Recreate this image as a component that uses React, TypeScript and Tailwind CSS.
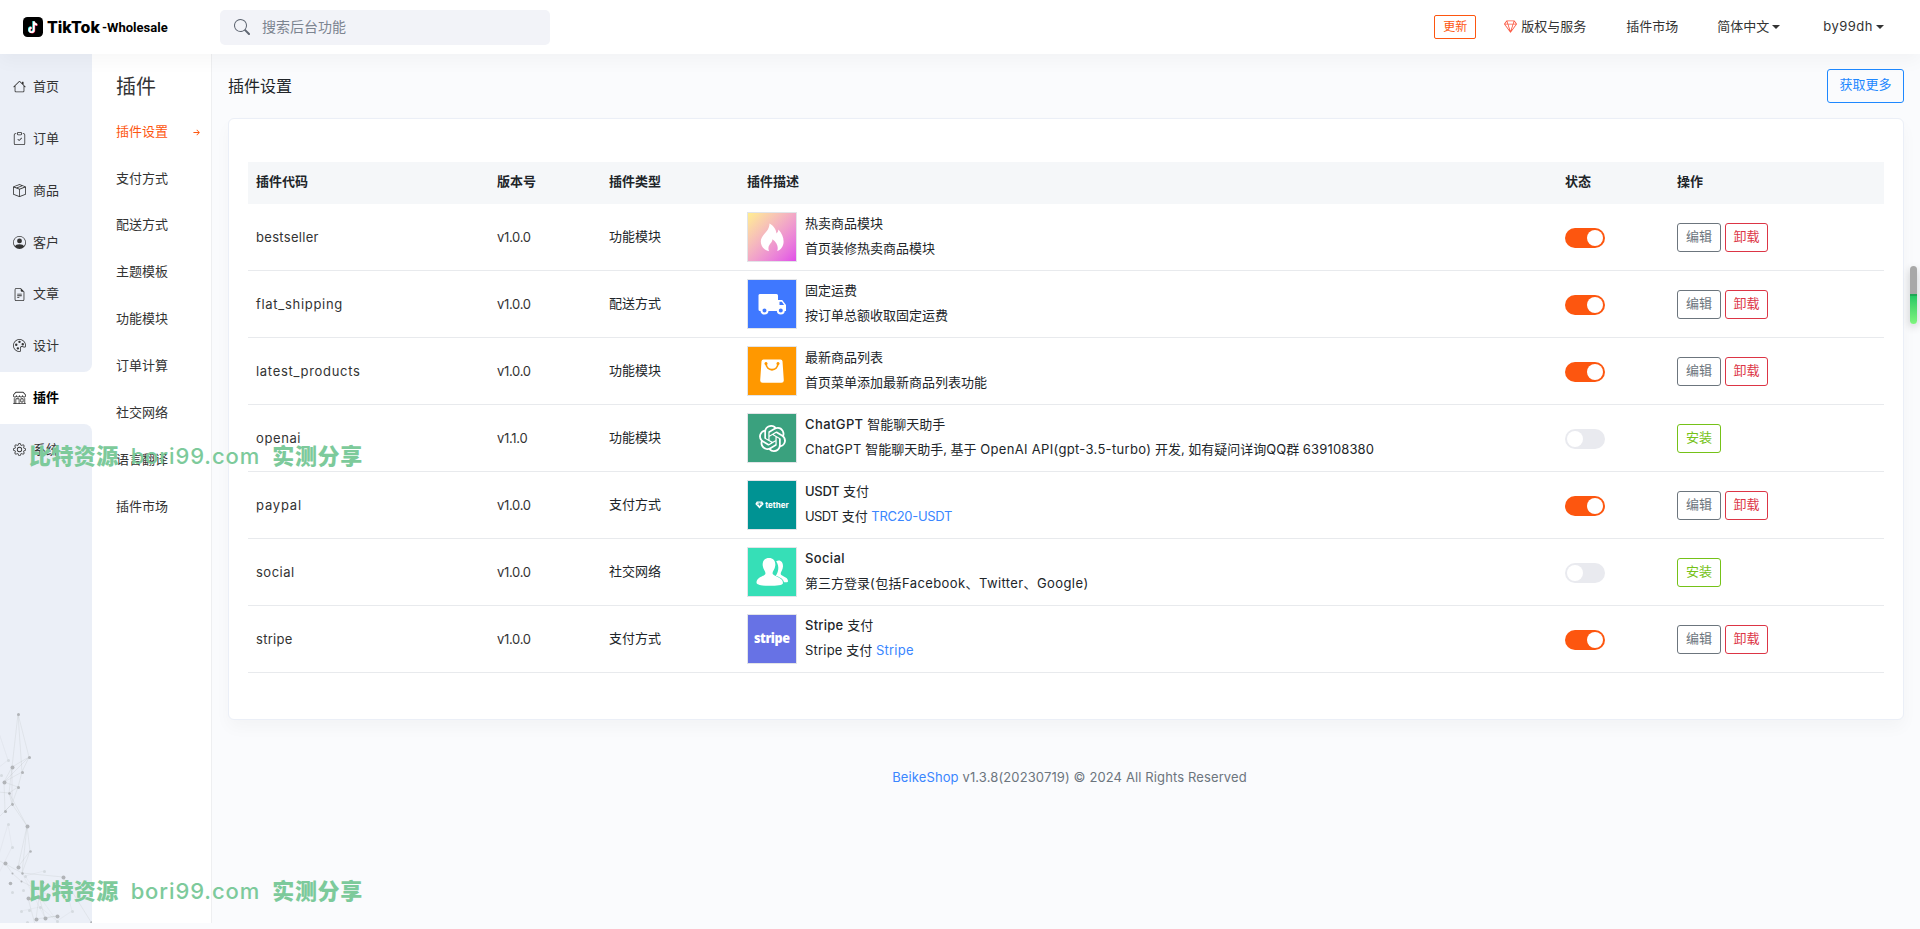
import * as React from 'react';
import {
  BsArrowRightShort,
  BsBoxSeam,
  BsClipboardCheck,
  BsFileEarmarkText,
  BsGear,
  BsGem,
  BsHouse,
  BsPalette,
  BsPersonCircle,
  BsSearch,
  BsShop,
} from 'react-icons/bs';
import { SiOpenai } from 'react-icons/si';

const sideMenu = [
  { label: '首页', icon: BsHouse },
  { label: '订单', icon: BsClipboardCheck },
  { label: '商品', icon: BsBoxSeam },
  { label: '客户', icon: BsPersonCircle },
  { label: '文章', icon: BsFileEarmarkText },
  { label: '设计', icon: BsPalette },
  { label: '插件', icon: BsShop },
  { label: '系统', icon: BsGear },
];

const ACTIVE = 6;

const subMenu = ['插件设置', '支付方式', '配送方式', '主题模板', '功能模块', '订单计算', '社交网络', '语言翻译', '插件市场'];

function FlameIcon() {
  return (
    <svg viewBox="0 0 48 48" className="h-12 w-12 fill-white">
      <path d="M21.500 10.500c4.500 2.500 6.500 6 7 10 1.300-1 1.800-2.400 1.900-3.900 3.300 3.800 5.200 7.600 5.200 11.900 0 4.700-2.600 8.200-6.400 9.500 1.400-4.200 0-8.300-4.700-11.800-.3 2.500-1.600 3.600-2.800 5.200-1.500 2-1.700 4.300-.6 6.800-4.700-1-8.300-4.700-8.300-9.700 0-7 8.700-9.300 8.700-18z" />
    </svg>
  );
}

function TruckIcon() {
  return (
    <svg viewBox="0 0 48 48" className="h-12 w-12">
      <path fill="#fff" d="M12.500 14h16a1.500 1.500 0 0 1 1.500 1.500V20h4.200l3.800 5v6h-26a1.500 1.500 0 0 1-1.500-1.500v-14A1.500 1.500 0 0 1 12.500 14z" />
      <path fill="#3f78ff" d="M31.500 21.800h2.300l2.300 3.200h-4.600z" />
      <circle cx="16.500" cy="30.500" r="3" fill="#3f78ff" stroke="#fff" strokeWidth="2" />
      <circle cx="32.800" cy="30.500" r="3" fill="#3f78ff" stroke="#fff" strokeWidth="2" />
    </svg>
  );
}

function BagIcon() {
  return (
    <svg viewBox="0 0 48 48" className="h-12 w-12">
      <path fill="#fff" d="M15.500 12.500h17a2 2 0 0 1 2 1.800l1.300 19a2.400 2.400 0 0 1-2.400 2.500H14.600a2.400 2.400 0 0 1-2.400-2.500l1.300-19a2 2 0 0 1 2-1.800z" />
      <path fill="none" stroke="#ff9800" strokeWidth="1.800" strokeLinecap="round" d="M18 16.500c.5 8.300 11.500 8.300 12 0" />
      <circle cx="18" cy="16.500" r="1.500" fill="#ff9800" />
      <circle cx="30" cy="16.500" r="1.500" fill="#ff9800" />
    </svg>
  );
}

function PeopleIcon() {
  return (
    <svg viewBox="0 0 48 48" className="h-12 w-12 fill-white">
      <path d="M28.200 13.300c3.800-2 7 .5 6.800 5.300-.2 3.300-2.300 5.300-2.300 7.200 0 2.600 7.300 2.900 7.300 7.100 0 1-.6 1.300-1.600 1.300h-2.400c-1.200-3.800-4.500-5-8.200-6.400 2.200-3.300 4.200-8.600.4-14.500z" />
      <path d="M21 10c4.300 0 6.700 3 6.300 7.500-.3 3.600-2.800 5.700-2.800 7.700 0 3.200 10.500 3.400 10.500 9.700 0 2.200-6.500 2.900-13.500 2.900S8.500 37 8.500 34.800c0-6.300 9-6.200 9-9.500 0-2-2.500-4.200-2.800-7.800C14.300 13 16.700 10 21 10z" />
    </svg>
  );
}

function TetherLogo() {
  return (
    <div className="flex items-center gap-px">
      <svg viewBox="0 0 10 9" className="h-2 w-[9px]">
        <path fill="#fff" d="M2 .500h6l1.700 3L5 8.500.3 3.500z" />
        <path fill="none" stroke="#009393" strokeWidth=".7" d="M3 2.300h4M5 2.300v3.400M2.700 3.800h4.600" />
      </svg>
      <span className="text-[8px] leading-none font-bold text-white">tether</span>
    </div>
  );
}

const plugins = [
  {
    code: 'bestseller', codeClass: 'tracking-[0.300px]', version: 'v1.0.0', type: '功能模块', title: '热卖商品模块',
    desc: '首页装修热卖商品模块', installed: true,
    bg: 'bg-gradient-to-br from-[#ffee8f] to-[#e14be8]', logo: <FlameIcon />,
  },
  {
    code: 'flat_shipping', codeClass: 'tracking-[0.700px]', version: 'v1.0.0', type: '配送方式', title: '固定运费',
    desc: '按订单总额收取固定运费', installed: true,
    bg: 'bg-[#3f78ff]', logo: <TruckIcon />,
  },
  {
    code: 'latest_products', codeClass: 'tracking-[0.700px]', version: 'v1.0.0', type: '功能模块', title: '最新商品列表',
    desc: '首页菜单添加最新商品列表功能', installed: true,
    bg: 'bg-[#ff9800]', logo: <BagIcon />,
  },
  {
    code: 'openai', codeClass: 'tracking-[0.600px]', version: 'v1.1.0', type: '功能模块', brand: 'ChatGPT', title: '智能聊天助手',
    desc: (
      <>
        <span className="tracking-[0.200px]">ChatGPT</span> 智能聊天助手, 基于{' '}
        <span className="tracking-[0.320px]">OpenAI API(gpt-3.5-turbo)</span> 开发, 如有疑问详询QQ群{' '}
        <span className="tracking-[0.150px]">639108380</span>
      </>
    ),
    installed: false,
    bg: 'bg-[#3aa17e]', logo: <SiOpenai className="text-[27px] text-white" />,
  },
  {
    code: 'paypal', codeClass: 'tracking-[0.800px]', version: 'v1.0.0', type: '支付方式', brand: 'USDT', title: '支付',
    brandClass: 'tracking-[-0.300px]',
    desc: <><span className="tracking-[-0.600px]">USDT</span> 支付</>,
    link: 'TRC20-USDT', linkClass: 'tracking-[-0.300px]', installed: true,
    bg: 'bg-[#009393]', logo: <TetherLogo />,
  },
  {
    code: 'social', codeClass: 'tracking-[0.500px]', version: 'v1.0.0', type: '社交网络', brand: 'Social', title: '',
    brandClass: 'tracking-[0.350px]',
    desc: <>第三方登录<span className="tracking-[0.400px]">(包括Facebook、Twitter、Google)</span></>, installed: false,
    bg: 'bg-[#36dfb7]', logo: <PeopleIcon />,
  },
  {
    code: 'stripe', codeClass: 'tracking-[0.300px]', version: 'v1.0.0', type: '支付方式', brand: 'Stripe', title: '支付',
    brandClass: 'tracking-[0.250px]',
    desc: <><span className="tracking-[0.200px]">Stripe</span> 支付</>,
    link: 'Stripe', linkClass: 'tracking-[0.250px]', installed: true,
    bg: 'bg-[#6772e5]',
    logo: <span className="scale-x-90 pb-0.5 font-['Open_Sans'] text-[14px] leading-none font-extrabold tracking-[-0.500px] text-white">stripe</span>,
  },
];

const columns = 'grid grid-cols-[240px_112px_138px_818px_112px_1fr] items-center';

function Caret() {
  return <span className="ml-[3px] inline-block border-x-4 border-t-4 border-x-transparent border-t-[#333]" />;
}

function Logo() {
  return (
    <div className="flex w-[220px] items-center pl-[23px]">
      <svg viewBox="0 0 20 20" className="h-5 w-5">
        <rect width="20" height="20" rx="4.500" fill="#000" />
        <g fill="none" strokeWidth="1.900">
          <path stroke="#25f4ee" d="M10.300 4v8.500a2.200 2.200 0 1 1-2.200-2.200M10.300 4c.2 1.900 1.500 3 3.300 3.200" />
          <path stroke="#fe2c55" d="M11.300 4.800v8.500a2.200 2.200 0 1 1-2.200-2.200M11.300 4.800c.2 1.900 1.500 3 3.300 3.200" />
          <path stroke="#fff" d="M10.800 4.400v8.500a2.200 2.200 0 1 1-2.200-2.200M10.800 4.400c.2 1.900 1.500 3 3.300 3.200" />
        </g>
      </svg>
      <span className="ml-1 w-[55px] text-[16px] font-extrabold text-black">TikTok</span>
      <span className="mt-0.5 font-['Roboto'] text-[13px] font-bold text-black">-Wholesale</span>
    </div>
  );
}

function Header() {
  return (
    <header className="relative z-10 flex h-[54px] items-center bg-white shadow-[0_8px_16px_rgba(0,0,0,0.030)]">
      <Logo />
      <div className="flex h-[35px] w-[330px] items-center rounded-[5px] bg-[#f2f3f8] pl-3.5">
        <BsSearch className="text-base text-[#5f6672]" />
        <span className="ml-3 text-sm text-[#7c8490]">搜索后台功能</span>
      </div>
      <div className="ml-auto flex items-center pr-9 pb-px">
        <button className="mr-7 h-6 w-[42px] rounded-[2px] border border-[#fd560f] text-xs text-[#fd560f]">更新</button>
        <BsGem className="mr-1 text-[13px] text-[#fb5a44]" />
        <span className="mr-10">版权与服务</span>
        <span className="mr-[39px]">插件市场</span>
        <span className="mr-[43px] flex items-center">简体中文<Caret /></span>
        <span className="flex items-center tracking-[0.500px]">by99dh<Caret /></span>
      </div>
    </header>
  );
}

// particle network that decorates the foot of the sidebar
const nodes = [
  [18, 24, 1.5], [29, 67, 1.5], [12, 77, 2], [22, 82, 1.5], [4, 92, 2], [18, 97, 1.5], [9, 103, 1.3], [12, 114, 1.4],
  [5, 121, 1.5], [27, 136, 2], [30, 161, 1.3], [5, 173, 2], [18, 177, 2], [12, 183, 1], [22, 183, 1.2], [10, 193, 1.8],
  [21, 191, 1], [42, 192, 1.8], [63, 187, 2], [28, 208, 2], [39, 207, 2], [48, 205, 2], [36, 229, 2], [45, 228, 2], [57, 226, 2], [91, 232, 1.3],
];
const faintNodes = [
  [8, 70], [8, 134], [12, 157], [44, 181], [25, 186], [12, 202], [23, 200], [21, 221], [29, 220], [40, 217], [72, 221], [57, 231], [27, 232], [1, 85],
];
const links = 'M18 24 12 77M18 24 22 82M18 24 29 67 12 77 4 92 18 97 9 103 12 114 27 136M29 67 22 82 4 92M29 67 4 92M22 82 18 97 12 114 5 121M12 77 9 103-2 102M9 103 27 136 30 161 22 183M12 77 12 114M27 136 18 177M27 136 22 183M4 92 5 121M12 114-2 128M30 161 18 177M5 173 12 183 21 191M-2 170 22 183M22 183 63 187M28 208 39 207 36 229M39 207 45 228 57 226M63 187 91 232M28 208 36 238M36 229 57 226M21 191 48 205';

function Particles() {
  return (
    <svg viewBox="0 0 92 233" className="mt-auto h-[233px] w-full">
      <path d={links} fill="none" stroke="#8a9089" strokeWidth=".5" opacity=".24" />
      <path d="M8 70-2 78M8 134-2 168M8 134 12 157-2 185M-2 40 8 70M44 181 25 186 57 231M72 221 57 231 40 217 21 221M72 221 63 187M22 183 45 228" fill="none" stroke="#8a9089" strokeWidth=".5" opacity=".14" />
      {nodes.map(([x, y, r], i) => (
        <circle key={i} cx={x + 0.5} cy={y + 0.5} r={r} fill="#b1b4b8" />
      ))}
      {faintNodes.map(([x, y], i) => (
        <circle key={i} cx={x + 0.5} cy={y + 0.5} r={1.5} fill="#d5dae0" />
      ))}
    </svg>
  );
}

function Sidebar() {
  return (
    <aside className="flex w-[92px] flex-col bg-white">
      {sideMenu.map(({ label, icon: Icon }, i) => (
        <div
          key={label}
          className={`flex h-[51.800px] shrink-0 items-center pl-[13px] ${i === 0 ? 'box-content pt-[7px]' : ''} ${
            i === ACTIVE ? 'bg-white font-bold text-black' : 'bg-[#ebeff7]'
          } ${i === ACTIVE - 1 ? 'rounded-br-lg' : ''} ${i === ACTIVE + 1 ? 'rounded-tr-lg' : ''}`}
        >
          <Icon className="mr-[7px] text-[13px] text-[#333]" />
          {label}
        </div>
      ))}
      <div className="-mt-px flex flex-1 flex-col bg-[#ebeff7]">
        <Particles />
      </div>
    </aside>
  );
}

function SubMenu() {
  return (
    <nav className="w-[120px] border-r border-[#eeeff1] bg-white pl-6">
      <h2 className="mt-[18px] mb-[6px] text-xl leading-[30px]">插件</h2>
      {subMenu.map((item, i) => (
        <div key={item} className={`flex h-[46.900px] items-center justify-between pr-2 ${i === 0 ? 'text-[#fd560f]' : ''}`}>
          {item}
          {i === 0 && <BsArrowRightShort className="mt-0.5 text-[13px]" />}
        </div>
      ))}
    </nav>
  );
}

function Switch({ on }: { on: boolean }) {
  return (
    <div className={`mt-0.5 flex h-5 w-10 items-center rounded-full px-0.5 ${on ? 'justify-end bg-[#fd560f]' : 'bg-[#e9eaef]'}`}>
      <span className="h-4 w-4 rounded-full bg-white" />
    </div>
  );
}

function PluginTable() {
  return (
    <div className="text-[#212529]">
      <div className={`${columns} h-[42px] bg-[#f5f7f9] pb-0.5 pl-[9px] font-bold`}>
        <span className="-ml-px">插件代码</span>
        <span>版本号</span>
        <span>插件类型</span>
        <span>插件描述</span>
        <span>状态</span>
        <span>操作</span>
      </div>
      {plugins.map((p) => (
        <div key={p.code} className={`${columns} h-[67px] border-b border-[#e8eaed] pl-[9px]`}>
          <span className={`mt-0.5 -ml-px text-[#333] ${p.codeClass}`}>{p.code}</span>
          <span className="mt-0.5 tracking-[-0.300px] text-[#333]">{p.version}</span>
          <span>{p.type}</span>
          <div className="flex items-center">
            <div className="mr-2 h-[50px] w-[50px] border border-[#e2e4e8]">
              <div className={`flex h-12 w-12 items-center justify-center ${p.bg}`}>{p.logo}</div>
            </div>
            <div className="pb-[3px] leading-[25px]">
              <div>
                {p.brand && <span className={`font-medium ${p.brandClass ?? 'tracking-[0.400px]'}`}>{p.brand}</span>} {p.title}
              </div>
              <div>
                {p.desc} {p.link && <a className={`text-[#3a86ff] ${p.linkClass}`}>{p.link}</a>}
              </div>
            </div>
          </div>
          <Switch on={p.installed} />
          {p.installed ? (
            <div className="flex gap-1">
              <button className="h-[29px] w-11 rounded-[3px] border border-[#6c757d] text-[#6c757d]">编辑</button>
              <button className="h-[29px] w-[43px] rounded-[3px] border border-[#dc3545] text-[#dc3545]">卸载</button>
            </div>
          ) : (
            <div className="flex">
              <button className="h-[29px] w-11 rounded-[3px] border border-[#75c218] text-[#75c218]">安装</button>
            </div>
          )}
        </div>
      ))}
    </div>
  );
}

function Watermark({ className }: { className: string }) {
  return (
    <div className={`absolute left-[29px] z-20 flex w-[334px] justify-between text-[22px] leading-none font-black whitespace-nowrap text-[#7dca9b] ${className}`}>
      <span className="tracking-[0.400px]">比特资源</span>
      <span className="font-medium tracking-[0.900px]">bori99.com</span>
      <span className="tracking-[0.700px]">实测分享</span>
    </div>
  );
}

export default function App() {
  return (
    <div className="relative flex h-[929px] w-[1920px] flex-col overflow-hidden bg-[#fafbfd] pb-[6px] font-[Inter,'Noto_Sans_CJK_SC',sans-serif] text-[13px] text-[#333]">
      <Header />
      <div className="flex min-h-0 flex-1">
        <Sidebar />
        <SubMenu />
        <main className="flex-1 px-4 pt-[15px]">
          <div className="flex h-[34px] items-center justify-between">
            <h1 className="text-base text-[#212529]">插件设置</h1>
            <button className="h-[34px] w-[77px] rounded-[3px] border border-[#1e88ff] pb-0.5 text-[#1e88ff]">获取更多</button>
          </div>
          <div className="mt-[15px] h-[602px] rounded-md border border-[#ebeff7] bg-white px-[19px] pt-[43px] shadow-[0_8px_16px_rgba(0,0,0,0.030)]">
            <PluginTable />
          </div>
          <footer className="mt-12 pl-[7px] text-center tracking-[0.120px] text-[#6c757d]">
            <a className="text-[#3a86ff]">BeikeShop</a> v1.3.8(20230719) © 2024 All Rights Reserved
          </footer>
        </main>
      </div>
      <Watermark className="top-[445px]" />
      <Watermark className="top-[880px]" />
      <div className="absolute top-[266px] right-[3px] z-20 flex h-[58px] w-[7px] flex-col overflow-hidden rounded-full shadow-[0_3px_8px_rgba(0,0,0,0.200)]">
        <span className="h-7 bg-[#a8a8a8]" />
        <span className="h-0.5 bg-[#1fa855]" />
        <span className="flex-1 bg-gradient-to-b from-[#22c965] to-[#7df57d]" />
      </div>
    </div>
  );
}
